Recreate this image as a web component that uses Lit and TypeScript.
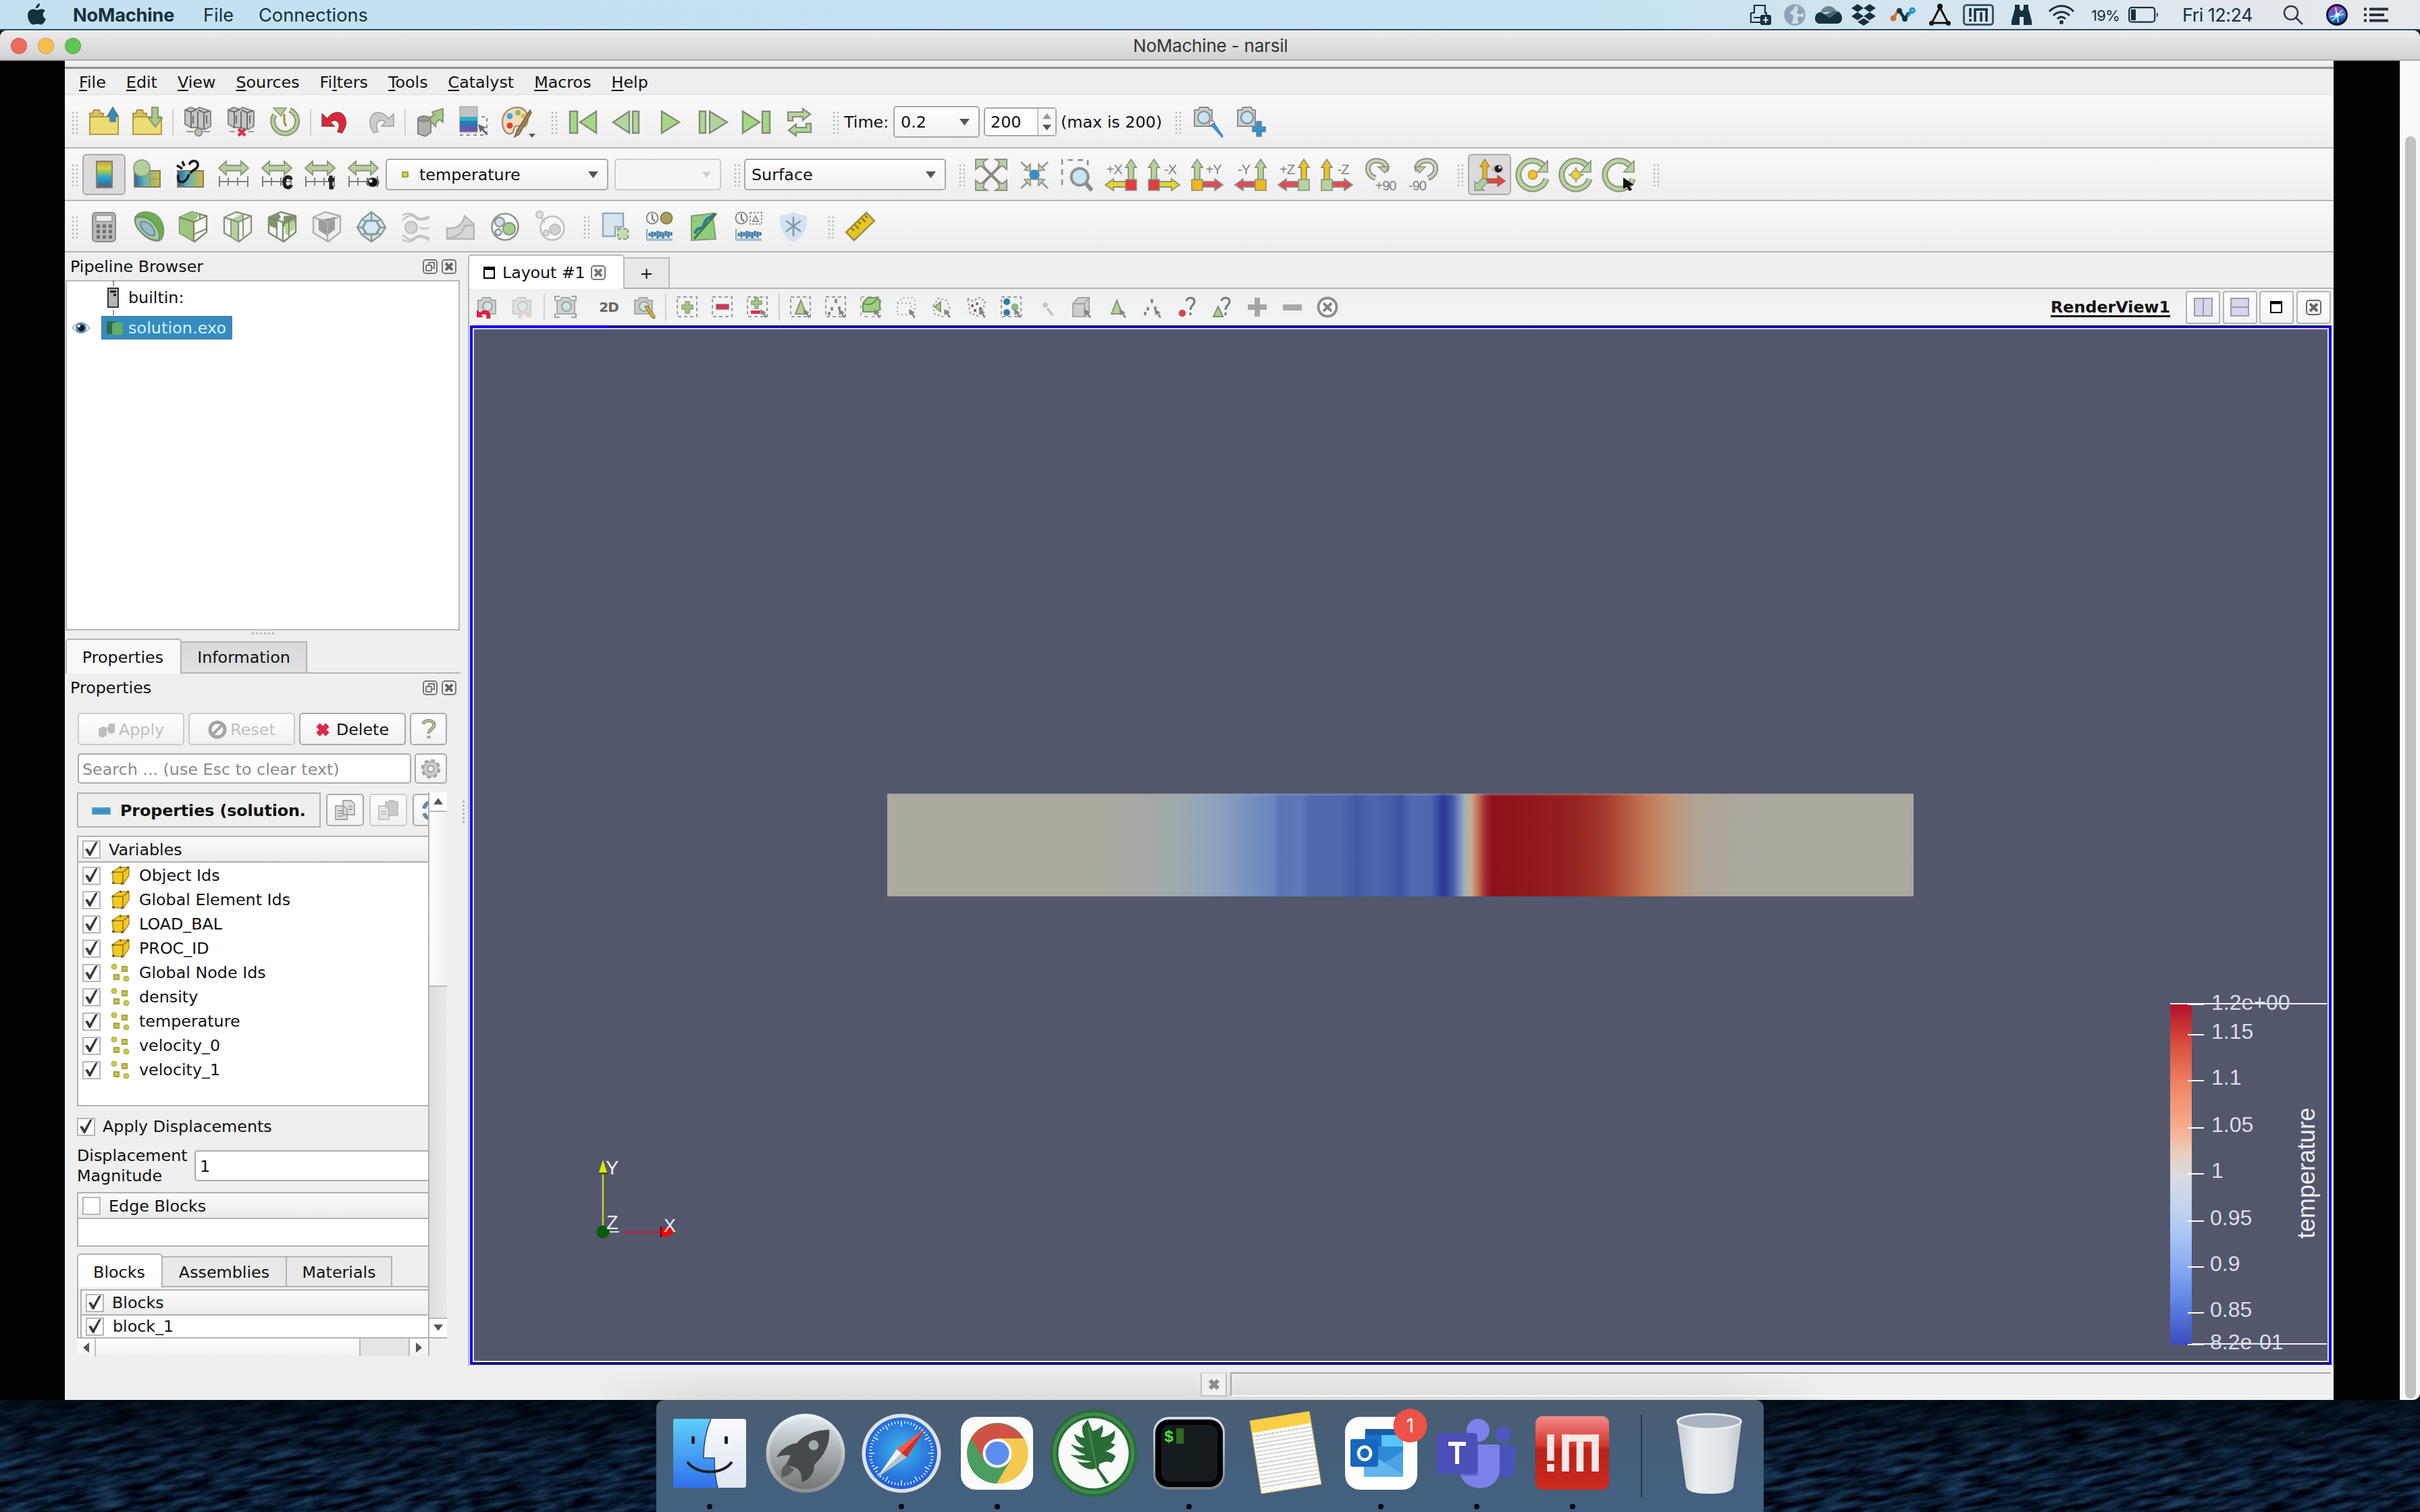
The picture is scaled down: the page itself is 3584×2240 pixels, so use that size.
import { LitElement, html, svg, css } from "lit";
import { customElement } from "lit/decorators.js";

const S = "#8b9080"; // icon outline
const icon = (body: unknown, size = 48) =>
  html`<svg class="ic" width=${size} height=${size} viewBox="0 0 ${size} ${size}" fill="none">${body}</svg>`;

/* ---------- main toolbar icons, 48px grid ---------- */
const folder = svg`<path d="M3 11h4l2-5h8l2 5h4v30H3z" fill="#dcc05c" stroke="#a8924a" stroke-width="2"/><path d="M9 16h36v26H3V20q0-4 6-4z" fill="#ecdc74" stroke="#b39a3e" stroke-width="2"/>`;
const server = svg`<path d="M5 6l8-4 9 3 4-3 9 3 8 3v22l-9 5-10-3-10 0-9-5z" fill="#c6c6c6" stroke="#858585" stroke-width="2"/><path d="M14 9v24M5 6l9 3 8-4M25 6l8 4 9-3M33 10v24M24 8v26M17 14v12M37 14v12" stroke="#6e6e6e" stroke-width="2"/>`;
const cube = (fill: string, st: string, inner: unknown) => svg`<path d="M4 10L22 2l22 6v24L26 46 4 33z" fill=${fill} stroke=${st} stroke-width="2.4"/>${inner}<path d="M4 10l21 7 19-9M25 17v28" stroke=${st} stroke-width="2.4"/>`;
const range = (extra: unknown) => svg`<path d="M2 14L13 4v6h22V4l11 10-11 10v-6H13v6z" fill="#b7cf9f" stroke="#8c9a7c" stroke-width="2"/><path d="M3 26v16M16 28v12M30 28v12M45 26v16M3 34h42" stroke="#808080" stroke-width="2"/>${extra}`;
const camera = svg`<path d="M4 6h6l2-4h12l2 4h4v24H4z" fill="#d0d0cc" stroke="#8c8c8c" stroke-width="2"/><circle cx="18" cy="17" r="9" fill="#c9e4ee" stroke="#7d98a4" stroke-width="2.5"/>`;
const clock = (x: number) => svg`<circle cx=${x} cy="11" r="8.5" stroke="#8a8a8a" stroke-width="2"/><path d="M${x} 5v7l4 4" stroke="#6a6a6a" stroke-width="2"/>`;
const plotBars = svg`<path d="M5 27v16h38" stroke="#8fa6b5" stroke-width="2"/><path d="M9 38v-5M13 40v-9M17 38v-6M21 41V30M25 39v-8M29 41v-9M33 38v-8M37 40v-9M41 37v-5" stroke="#3f7fac" stroke-width="3.4"/><path d="M5 43h38" stroke="#a9c2d0" stroke-width="4"/>`;

const axisIcon = (label: string, up: string, side: string, corner: string, right: boolean) => {
  const c = right ? 39 : 9;
  return svg`
  <path d="M${c - 4} 32V13h-4L${c} 1l8 12h-4v19z" fill=${up} stroke=${S} stroke-width="1.8"/>
  <path d=${right ? "M31 34H13v-4L1 39l12 8v-5h18z" : "M17 34h18v-4l12 9-12 8v-5H17z"} fill=${side} stroke=${S} stroke-width="1.8"/>
  <rect x=${right ? 31 : 1} y="31" width="16" height="16" fill=${corner} stroke=${S} stroke-width="1.6"/>
  <text x=${right ? 14 : 33} y="23" text-anchor="middle" class="axt">${label}</text>`;
};
const ring = (extra: unknown) => svg`<path d="M41 12A21 21 0 1 0 44 30" stroke=${S} stroke-width="9"/><path d="M41 12A21 21 0 1 0 44 30" stroke="#b5d49b" stroke-width="5"/><path d="M46 3v17H31z" fill="#b5d49b" stroke=${S} stroke-width="1.6"/>${extra}`;
const pointer = svg`<path d="M30 28v17l5-3 4 6 4-2-4-6 7-1z" fill="#111"/>`;

const I: Record<string, unknown> = {
  open: svg`${folder}<path d="M37 2l8 13h-4v8h-8v-8h-4z" fill="#2f8fc0" stroke="#53788a" stroke-width="1.5"/>`,
  save: svg`${folder}<path d="M31 2h9v16h6L36 31 26 18h5z" fill="#aac98c" stroke="#8b9a68" stroke-width="2"/>`,
  connect: svg`${server}<circle cx="25" cy="39" r="5.500" fill="#b7c7ae" stroke="#888" stroke-width="2"/><path d="M7 38h11M32 38h10" stroke="#999" stroke-width="2"/>`,
  disconnect: svg`${server}<path d="M20 34l10 10M30 34L20 44" stroke="#d8304a" stroke-width="4.500"/><path d="M7 38h8M35 38h8" stroke="#999" stroke-width="2"/>`,
  reload: svg`<path d="M10 13a18 18 0 1 0 22-7" stroke="#8b967b" stroke-width="8"/><path d="M10 13a18 18 0 1 0 22-7" stroke="#aed292" stroke-width="4"/><path d="M8 3h19l-8 12z" fill="#aed292" stroke="#8b967b" stroke-width="1.5"/><path d="M24 12v12l3 6" stroke="#a2913a" stroke-width="3"/>`,
  undo: svg`<path d="M3 12v18h18l-6-6c8-7 18 0 11 14l6 2c14-17 2-36-12-29-3 1-7 5-9 8z" fill="#e0243a" stroke="#8e3a3e" stroke-width="1.5"/>`,
  redo: svg`<path d="M45 12v18H27l6-6c-8-7-18 0-11 14l-6 2C2 23 14 4 28 11c3 1 7 5 9 8z" fill="#cdcdcd" stroke="#9f9f9f" stroke-width="1.5"/>`,
  extract: svg`<path d="M6 20l8-5 11 2v22l-8 6-11-4z" fill="#b0b0ac" stroke="#808080" stroke-width="2"/><ellipse cx="15" cy="19" rx="9" ry="4" fill="#9a9a96" stroke="#777" stroke-width="1.5"/><path d="M24 22c0-6 3-8 6-8l-3-5L43 4v20l-5-4c-4 2-6 5-6 10z" fill="#a7c78d" stroke="#84946f" stroke-width="2"/>`,
  cmapSel: svg`<rect x="4" y="1" width="26" height="38" fill="#c4c4c4" stroke="#999"/><rect x="4" y="16" width="26" height="9" fill="#2fb0bf"/><rect x="4" y="22" width="26" height="9" fill="#2778b8"/><rect x="4" y="30" width="26" height="8" fill="#6a55a8"/><path d="M4 43h40V16H32" stroke="#85859c" stroke-width="2" stroke-dasharray="5 5"/><path d="M31 27l12 5-4 2 6 7-2 2-6-7-3 3z" fill="#666"/>`,
  palette: svg`<path d="M24 2C10 3 3 13 3 24c0 12 7 19 13 17 6-2 2-9 7-11 6-2 11 4 15-1 5-8 4-27-14-27z" fill="#f0dcbc" stroke="#a09070" stroke-width="2.4"/><circle cx="26" cy="10" r="4" fill="#8fbd62"/><circle cx="14" cy="15" r="4.5" fill="#4ba5dc"/><circle cx="14" cy="29" r="4.5" fill="#e23b30"/><circle cx="34" cy="15" r="3.5" fill="#e0b43a"/><path d="M44 6L24 37l-3 9 7-4L46 10z" fill="#a08350" stroke="#6f6040" stroke-width="1.4"/><path d="M42 41h10l-5 6z" fill="#555"/>`,
  first: svg`<path d="M4 8h11v32H4zM43 8v32L19 24z" fill="#a6d884" stroke="#828c76" stroke-width="2.4"/>`,
  back: svg`<path d="M33 8h9v32h-9zM28 8v32L4 24z" fill="#b2d69a" stroke="#828c76" stroke-width="2.4"/>`,
  play: svg`<path d="M12 8v32l26-16z" fill="#a6d884" stroke="#828c76" stroke-width="2.4"/>`,
  fwd: svg`<path d="M4 8h9v32H4zM19 8v32l26-16z" fill="#b2d69a" stroke="#828c76" stroke-width="2.4"/>`,
  last: svg`<path d="M33 8h11v32H33zM4 8v32l25-16z" fill="#a6d884" stroke="#828c76" stroke-width="2.4"/>`,
  loop: svg`<path d="M7 22V9h22V4l11 8-11 9v-5H14v6zM41 26v13H19v5L8 36l11-9v5h15v-6z" fill="#b2d69a" stroke="#828c76" stroke-width="2.2"/>`,
  camPick: svg`${camera}<circle cx="30" cy="26" r="4" fill="#fff" stroke="#d66" stroke-width="1.5"/><path d="M28 28l5-3 13 19-1 3z" fill="#2e9bd8" stroke="#487c9c" stroke-width="1"/>`,
  camAdd: svg`${camera}<path d="M32 23h7v8h6v7h-6v7h-7v-7h-6v-7h6z" fill="#2f93cc" stroke="#5585a0" stroke-width="1.500"/>`,

  cbar: svg`<defs><linearGradient id="cb" x2="0" y2="1"><stop offset="0" stop-color="#b99a4e"/><stop offset=".25" stop-color="#ddd23c"/><stop offset=".45" stop-color="#7cc071"/><stop offset=".6" stop-color="#25a7d4"/><stop offset=".85" stop-color="#3d7a9c"/><stop offset="1" stop-color="#555a80"/></linearGradient></defs><rect x="13" y="4" width="23" height="39" fill="url(#cb)" stroke="#8a8070" stroke-width="2"/>`,
  edit: svg`<defs><linearGradient id="ce"><stop offset="0" stop-color="#2f5f93"/><stop offset=".4" stop-color="#5fb3c4"/><stop offset="1" stop-color="#d9ba36"/></linearGradient></defs><rect x="5" y="18" width="38" height="24" fill="url(#ce)" stroke="#857c58" stroke-width="2"/><path d="M28 19v22M28 30h15" stroke="#b59a3c" stroke-width="2"/><ellipse cx="16" cy="14" rx="12" ry="12" fill="#b4d19c" stroke="#94a283" stroke-width="2"/>`,
  linkc: svg`<rect x="5" y="18" width="38" height="24" fill="url(#ce)" stroke="#857c58" stroke-width="2"/><path d="M22 9c4-9 14-6 13 1-1 7-9 6-11 12M6 24c-2 10 3 12 8 10s7-8 8-11M12 4l3 7M4 10l8 5" stroke="#181818" stroke-width="3.6"/>`,
  range: range(""),
  rangeC: range(svg`<path d="M45 31c-1-5-10-6-10 4s9 9 10 4" stroke="#222" stroke-width="5.500"/>`),
  rangeT: range(svg`<path d="M40 25v18h4M36 31h9" stroke="#222" stroke-width="5"/>`),
  rangeV: range(svg`<ellipse cx="38" cy="35" rx="10" ry="7" fill="#666"/><circle cx="38" cy="35" r="6.500" fill="#111"/><circle cx="35" cy="33" r="2.500" fill="#eee"/>`),
  resetCam: svg`<path d="M8 8l32 32M40 8L8 40" stroke="#85897c" stroke-width="4"/><path d="M1 1h17l-6 4 2 7-7-1-6 5zM47 1v15l-6-5-7 1 2-7-6-4zM1 47V32l6 5 7-1-2 7 6 4zM47 47H30l6-4-2-7 7 1 6-5z" fill="#b9cfa8" stroke=${S} stroke-width="2"/>`,
  zoomData: svg`<path d="M4 5l16 15M44 5L28 20M4 44l16-15M44 44L28 29" stroke="#9aa090" stroke-width="3"/><path d="M18 18V8L9 17zM30 18V8l9 9zM18 30v10L9 31zM30 30v10l9-9z" fill="#c0d2b0" stroke=${S} stroke-width="1.600"/><circle cx="24" cy="24" r="7" fill="#2d92ca" stroke="#62879a" stroke-width="1.500"/>`,
  zoomBox: svg`<path d="M1 39V2h38v10" stroke="#8f8f8f" stroke-width="2.600" stroke-dasharray="8 7"/><path d="M34 34l11 13" stroke="#8b8b84" stroke-width="6"/><circle cx="27" cy="27" r="12.500" fill="#c8e6f0" stroke="#8a9296" stroke-width="4"/>`,
  pX: axisIcon("+X", "#b5d49b", "#e6d52c", "#e23c3c", true),
  mX: axisIcon("-X", "#b5d49b", "#e6d52c", "#e23c3c", false),
  pY: axisIcon("+Y", "#b5d49b", "#e4485a", "#f0b81c", false),
  mY: axisIcon("-Y", "#b5d49b", "#e4485a", "#f0b81c", true),
  pZ: axisIcon("+Z", "#f0c31c", "#e4485a", "#b5d49b", true),
  mZ: axisIcon("-Z", "#f0c31c", "#e4485a", "#b5d49b", false),
  rotP: svg`<path d="M17 29C0 22 4 3 18 3s18 10 14 15" stroke=${S} stroke-width="8"/><path d="M17 29C0 22 4 3 18 3s18 10 14 15" stroke="#c6d6b8" stroke-width="4"/><path d="M21 12h16l-6 9z" fill="#b5d49b" stroke=${S} stroke-width="1.500"/><text x="32" y="47" text-anchor="middle" class="axt">+90</text>`,
  rotM: svg`<path d="M31 29C48 22 44 3 30 3s-18 10-14 15" stroke=${S} stroke-width="8"/><path d="M31 29C48 22 44 3 30 3s-18 10-14 15" stroke="#c6d6b8" stroke-width="4"/><path d="M11 12h16l-9 9z" fill="#b5d49b" stroke=${S} stroke-width="1.500"/><text x="15" y="47" text-anchor="middle" class="axt">-90</text>`,
  axesVis: svg`<path d="M14 30V12h-4l7-11 7 11h-4v18z" fill="#f0b51c" stroke="#9a8a50" stroke-width="1.500"/><path d="M20 30h16v-5l11 8-11 8v-5H20z" fill="#df4a3c" stroke="#a05a50" stroke-width="1.500"/><path d="M18 30l3 5-9 9 4 3H2V34l4 3 7-8z" fill="#a6d29a" stroke=${S} stroke-width="1.500"/><ellipse cx="36" cy="15" rx="9" ry="6" fill="#bbb"/><circle cx="37" cy="15" r="5.500" fill="#1c1c1c"/><circle cx="39" cy="13" r="2" fill="#fff"/>`,
  cen1: ring(svg`<circle cx="24" cy="24" r="6.500" fill="#f2c51c" stroke="#c9984c" stroke-width="2"/>`),
  cen2: ring(svg`<path d="M24 13v22M13 24h22" stroke="#999" stroke-width="3"/><circle cx="24" cy="24" r="6.500" fill="#e6d43c" stroke="#b8a85c" stroke-width="2"/>`),
  cen3: ring(pointer),

  calc: svg`<rect x="7" y="3" width="34" height="43" rx="5" fill="#b9b9b9" stroke="#8b8b8b" stroke-width="2"/><rect x="12" y="7" width="24" height="9" fill="#ededed" stroke="#8f8f8f" stroke-width="1.500"/><path d="M13 23h23M13 31h23M13 39h23" stroke="#6f6f6f" stroke-width="5" stroke-dasharray="5 4"/>`,
  contour: svg`<path d="M4 10C12-2 34 0 42 14s4 30-4 31C24 46 2 28 4 10z" fill="#69b043" stroke="#84947a" stroke-width="2"/><path d="M4 12c6-6 22-2 30 10s8 22 2 22C22 44 2 26 4 12z" fill="#a3c8a0" stroke="#748a74" stroke-width="2"/><path d="M12 18c4-4 14 0 18 7s4 12 0 12c-8 0-20-12-18-19z" fill="#93bccb" stroke="#6d8794" stroke-width="2"/>`,
  clip: cube("#fafaf8", "#7d8a68", svg`<path d="M4 10L22 2l12 3-9 12v28L4 33z" fill="#9dc47d"/><path d="M25 35l19-8M34 5v8" stroke="#7d8a68" stroke-width="2"/>`),
  slice: cube("#f6f6f4", "#8a9280", svg`<path d="M14 13l18-9v9l-7 4v28l-11-7z" fill="#b4d39b"/><path d="M14 13v26M32 5v34" stroke="#8a9280" stroke-width="2"/>`),
  threshold: cube("#f6f6f4", "#7f8a70", svg`<path d="M4 10L18 4l4 5-6 8v10L4 22zM26 8l14-1 4 1v10l-18 6z" fill="#7f966a"/><path d="M28 20l14-6v14l-8 4v6l-6-4z" fill="#b4d890"/><path d="M16 17v22M34 12v26" stroke="#7f8a70" stroke-width="2"/>`),
  subset: cube("#ededed", "#b0b0b0", svg`<path d="M12 14l24-4v18l-12 9-12-8z" fill="#9c9c9c"/><path d="M12 14l12 3 12-7" stroke="#808080" stroke-width="2"/>`),
  glyph: svg`<path d="M24 2l14 11 7 12-7 11-14 10-14-10L3 25l7-12z" fill="#d5e8ed" stroke="#849a98" stroke-width="2.400"/><path d="M24 2v12M10 13l7 4M38 13l-7 4M2 25h10M46 25H36M10 36l7-4M38 36l-7-4M24 46V35" stroke="#849a98" stroke-width="2.400"/><path d="M17 15h14l6 10-6 10H17l-6-10z" stroke="#849a98" stroke-width="3"/>`,
  stream: svg`<path d="M4 7c8-5 14-3 20 2s14 2 20-1M4 14c10-9 14-8 20-3s14 2 20 0M4 36c10 9 14 8 20 3s14 0 20 2M4 43c8 5 14 3 20-2s14 0 20 3M30 25c5 3 9 2 14 0" stroke="#c2c2c2" stroke-width="2.400"/><circle cx="17" cy="25" r="9" fill="#d4d4d4" stroke="#b9b9b9" stroke-width="2"/>`,
  warp: svg`<path d="M4 26c14 2 24-6 26-18l14 12v22H4z" fill="#d6d6d6" stroke="#b5b5b5" stroke-width="2.400"/><path d="M4 41c16-2 24-8 26-19h14" stroke="#b5b5b5" stroke-width="2.400"/>`,
  group: svg`<circle cx="24" cy="24" r="19.500" fill="#fcfcfc" stroke="#8b978b" stroke-width="2.600"/><circle cx="16" cy="17" r="7" fill="#cfe0ea" stroke="#8b9aa0" stroke-width="2.400"/><circle cx="30" cy="27" r="9" fill="#a4cf8b" stroke="#8b9880" stroke-width="2.400"/><circle cx="14" cy="32" r="4.500" fill="#dfe8ef" stroke="#879098" stroke-width="2.400"/>`,
  extractG: svg`<circle cx="28" cy="26" r="17.500" fill="#f8f8f8" stroke="#c0c0c0" stroke-width="2.600"/><circle cx="9" cy="6" r="5" fill="#e2e2e2" stroke="#bcbcbc" stroke-width="2"/><circle cx="32" cy="28" r="8" fill="#d0d0d0" stroke="#bdbdbd" stroke-width="2"/><circle cx="19" cy="33" r="4" fill="#ddd" stroke="#bcbcbc" stroke-width="2"/><path d="M11 10l6 8" stroke="#bbb" stroke-width="2"/>`,
  selShape: svg`<path d="M6 4h30v20H24v14H6z" fill="#d7e5f0" stroke="#93a9bd" stroke-width="2.400"/><path d="M28 27h15v15H28z" fill="#c5dbb0" stroke="#8da273" stroke-width="2.400" stroke-dasharray="5 3"/>`,
  plotTime: svg`${clock(13)}<circle cx="34" cy="11" r="8.500" fill="#a89f5f" stroke="#8a8150" stroke-width="2"/>${plotBars}`,
  plotLine: svg`<path d="M5 8l31-4 5 38-36 2z" fill="#8fce7c" stroke="#7fa06c" stroke-width="2"/><path d="M10 34c6-14 10-2 14-14s8-6 16-16" stroke="#2f74a8" stroke-width="4.500"/><path d="M9 42L42 4" stroke="#457a38" stroke-width="3"/>`,
  plotSel: svg`${clock(13)}<path d="M26 3h17v17H26z" stroke="#999" stroke-width="2" stroke-dasharray="3 2"/><path d="M30 16l4-8 4 8z" stroke="#999" stroke-width="2"/>${plotBars}`,
  probe: svg`<path d="M24 2c6 4 12 5 20 5 1 20-5 32-20 40C9 39 3 27 4 7c8 0 14-1 20-5z" fill="#d5e2ef"/><path d="M24 9v29M13 15l22 16M35 15L13 31" stroke="#7c9ab3" stroke-width="2.600"/>`,
  ruler: svg`<path d="M3 32L33 3l12 12-30 29z" fill="#e4c720" stroke="#9a8648" stroke-width="2.400"/><path d="M11 26l4 4M16 21l6 6M21 16l4 4M26 11l6 6M31 7l4 4" stroke="#85702c" stroke-width="2.200"/>`,
};

/* ---------- render-view toolbar icons, 36px grid ---------- */
const dashBox = svg`<rect x="3" y="3" width="29" height="29" stroke="#9a9a9a" stroke-width="2" stroke-dasharray="5 4"/>`;
const cur = svg`<path d="M22 21l9 5-3 1 4 6-3 1-3-6-3 2z" fill="#808080"/>`;
const cam = (f: string) => svg`<path d="M5 8h5l2-4h11l2 4h6v20H5z" fill=${f} stroke="#a9a9a6" stroke-width="2"/><circle cx="19" cy="17" r="7" fill="#cfe3e4" stroke="#96a5a1" stroke-width="2"/>`;
const tri = svg`<path d="M18 8l8 20H10z" fill="#b2d28f" stroke="#879472" stroke-width="2"/>`;
const pts = svg`<path d="M18 6v6M12 18v5M23 17v5M8 25v5" stroke="#808080" stroke-width="3.500"/>`;
const V: Record<string, unknown> = {
  undo: svg`${cam("#d3d3d1")}<path d="M3 22v11h10l-3-3c5-4 9 0 7 5h6c3-12-8-16-15-9z" fill="#e11f3b"/>`,
  redo: svg`<g opacity=".55">${cam("#d3d3d1")}<path d="M32 22v11H22l3-3c-5-4-9 0-7 5h-5c-3-12 8-16 15-9z" fill="#dcb6b6"/></g>`,
  snap: svg`${cam("#d3d3d1")}<path d="M2 9V2h7M26 2h7v7M2 27v6h7M26 33h7v-6" stroke="#a0a0a0" stroke-width="2"/>`,
  zoom: svg`${cam("#c9c9c6")}<path d="M20 17l4-1 11 16-1 3-4-2z" fill="#d6bf2e" stroke="#8c7c34" stroke-width="1.500"/>`,
  selAdd: svg`${dashBox}<path d="M15 10h6v5h5v6h-5v6h-6v-6h-5v-6h5z" fill="#a2c97c" stroke="#8b9a70" stroke-width="1.500"/>`,
  selSub: svg`${dashBox}<rect x="9" y="14" width="18" height="7" fill="#dc3050" stroke="#96606a" stroke-width="1.500"/>`,
  selTog: svg`${dashBox}<path d="M14 4h5v5h5v5h-5v6h-5v-6H9V9h5z" fill="#a2c97c" stroke="#8b9a70" stroke-width="1.500"/><rect x="8" y="23" width="14" height="5" fill="#dc3050"/>${cur}`,
  cells: svg`${dashBox}${tri}${cur}`,
  points: svg`${dashBox}${pts}${cur}`,
  frus: svg`<rect x="3" y="3" width="29" height="29" stroke="#b0b0b0" stroke-width="2" stroke-dasharray="5 6"/><path d="M6 12l7-8h14l4 4v14l-6 3H6z" fill="#9ecf7e" stroke="#6f9160" stroke-width="2"/><path d="M7 13c10 3 14 0 20-7" stroke="#6f9160" stroke-width="2"/>${cur}`,
  frusP: svg`<path d="M5 12l8-8h14l4 5v14l-6 6H5zM5 12h20v18" stroke="#a5a5a5" stroke-width="2" stroke-dasharray="2 4"/>${cur}`,
  poly: svg`<path d="M6 16l8-11 12 3 5 12-11 12-12-4z" stroke="#a3a3a3" stroke-width="2" stroke-dasharray="3 3"/><path d="M17 10v15l-9-7.500z" fill="#9fc77d" stroke="#778a62" stroke-width="1.500"/>${cur}`,
  polyP: svg`<path d="M5 5l8 4 9-5 9 5-3 12-8 10-11-4z" stroke="#a89d9e" stroke-width="2.500" stroke-dasharray="3 3"/><path d="M12 14v4M19 11v4M16 21v4M24 18v4" stroke="#7a5c60" stroke-width="3.500"/>${cur}`,
  block: svg`${dashBox}<circle cx="11" cy="10" r="5" fill="#2e7da5"/><circle cx="11" cy="26" r="5" fill="#2e7da5"/><circle cx="23" cy="18" r="5.500" fill="#8fb587"/>${cur}`,
  hovP: svg`<circle cx="16" cy="15" r="4" fill="#c8c8c8"/><path d="M19 20l8 10" stroke="#bdbdbd" stroke-width="3.500"/>`,
  hovC: svg`<path d="M5 13l8-9h16v22l-5 6H5zM5 13h17v18M22 13l7-9" fill="#cecece" stroke="#a5a5a5" stroke-width="2"/>${cur}`,
  cellI: svg`${tri}${cur}`,
  pntI: svg`${pts}${cur}`,
  qP: svg`<path d="M17 9c1-7 13-6 12 1 0 5-6 5-6 12M23 26v4" stroke="#777" stroke-width="3"/><circle cx="11" cy="27" r="5" fill="#e1404a" stroke="#a07070"/>`,
  qC: svg`<path d="M17 9c1-7 13-6 12 1 0 5-6 5-6 12M23 26v4" stroke="#777" stroke-width="3"/><path d="M12 17l7 15H5z" fill="#abcf88" stroke="#7f8f6a" stroke-width="2"/>`,
  plus: svg`<path d="M14 4h8v10h10v8H22v10h-8V22H4v-8h10z" fill="#a5a5a5"/>`,
  minus: svg`<rect x="4" y="14" width="28" height="9" fill="#a8a8a8"/>`,
  clear: svg`<circle cx="18" cy="18" r="13.500" fill="#fff" stroke="#8d8d8d" stroke-width="4"/><path d="M12 12l12 12M24 12L12 24" stroke="#838383" stroke-width="4"/>`,
};

const ocean = html`<div class="ocean"><svg width="3900" height="1200" viewBox="0 0 3900 1200">
  <defs><filter id="wv" x="0" y="0" width="100%" height="100%" color-interpolation-filters="sRGB">
    <feTurbulence type="fractalNoise" baseFrequency=".022 .11" numOctaves="5" seed="11"/>
    <feColorMatrix values=".26 .04 0 0 -.115  .42 .08 0 0 -.145  .54 .12 0 0 -.145  0 0 0 0 1"/>
  </filter></defs><rect width="3900" height="1200" filter="url(#wv)"/></svg></div>`;

/* ---------- dock icons, one 142x166 slot each ---------- */
const ticks = Array.from({ length: 60 }, (_, i) => svg`<path d="M71 31v${i % 5 ? 4 : 8}" transform="rotate(${i * 6} 71 79)" stroke="#e6f0ff" stroke-width="1.500"/>`);
const D: Record<string, unknown> = {
  finder: svg`<defs><linearGradient id="fa" x2="0" y2="1"><stop stop-color="#5fd0fa"/><stop offset="1" stop-color="#2f6feb"/></linearGradient><linearGradient id="fb" x2="0" y2="1"><stop stop-color="#f7f8fb"/><stop offset="1" stop-color="#dfe7f0"/></linearGradient></defs>
    <rect x="17" y="28" width="108" height="102" rx="4" fill="url(#fb)"/><path d="M21 28h52c-8 18-11 38-11 58h16c0 15 1 30 5 44H21q-4 0-4-4V32q0-4 4-4z" fill="url(#fa)"/><path d="M73 28c-8 18-11 38-11 58h16c0 15 1 30 5 44" fill="none" stroke="#24456b" stroke-width="1.500"/>
    <path d="M46.500 56v7M95.500 56v7" stroke="#1b2129" stroke-width="5" stroke-linecap="round"/><path d="M39 93c14 18 50 18 64 0" fill="none" stroke="#1b2129" stroke-width="4" stroke-linecap="round"/>`,
  rocket: svg`<defs><linearGradient id="ro" x2="0" y2="1"><stop stop-color="#dfe9ee"/><stop offset=".5" stop-color="#a5adb0"/><stop offset="1" stop-color="#747575"/></linearGradient><linearGradient id="rp" x2="0" y2="1"><stop stop-color="#eef6fa"/><stop offset="1" stop-color="#8f8f8f"/></linearGradient></defs><circle cx="71" cy="79" r="58.500" fill="url(#rp)"/><circle cx="71" cy="79" r="53" fill="url(#ro)"/>
    <path d="M106 44c-22 1-38 8-48 20-14 2-24 10-30 21 8-3 15-4 21-3l-7 14c10 4 18 3 22 13l2 13c12-5 18-13 18-26 14-13 24-30 22-52z" fill="#474a4d"/><circle cx="83" cy="67" r="7.500" fill="#a3aaad"/><path d="M42 95c-6 5-8 12-6 20 8-2 14-6 18-12z" fill="#5a5d60"/>`,
  safari: svg`<defs><radialGradient id="sa" cy=".45"><stop stop-color="#3fb9ea"/><stop offset="1" stop-color="#2263d8"/></radialGradient></defs><circle cx="71" cy="79" r="58.500" fill="#dfe2e4"/><circle cx="71" cy="79" r="53" fill="url(#sa)"/>${ticks}
    <path d="M107 42L64 73l7 6z" fill="#ff5a4c"/><path d="M107 42L71 79l8 6z" fill="#c93028"/><path d="M35 115l29-42 7 6z" fill="#f5f5f5"/><path d="M35 115l36-36 8 6z" fill="#b9c2c6"/>`,
  chrome: svg`<rect x="17" y="25" width="107" height="108" rx="22" fill="#fbfbfb"/><circle cx="71" cy="79" r="45" fill="#4a9d60"/><path d="M32 57a45 45 0 0 1 78 1H71L52 90z" fill="#cf5344"/><path d="M71 57h40a45 45 0 0 1-41 67l20-34z" fill="#f5c852"/><circle cx="71" cy="79" r="21.500" fill="#fff"/><circle cx="71" cy="79" r="17.500" fill="#5b8def"/>`,
  leaf: svg`<circle cx="71.500" cy="79" r="64.500" fill="#2a6c38"/><circle cx="71.500" cy="79" r="58" fill="none" stroke="#3f8c4d" stroke-width="5"/><circle cx="71.500" cy="79" r="52" fill="#f8fbf8"/><path d="M63 29c3 8 5 12 7 17 5-1 11-4 15-9 1 7 0 12-3 18 7 0 14-3 21-10 1 9-1 14-6 18 3 2 5 2 7 3-4 5-9 8-15 10 5 1 10 3 15 7-1 4-3 7-6 10-7-3-12-1-18 2l-1 6 16 22-6 1-14-23c-9 5-19-1-28-10 8 2 15 2 22 0-13-1-24-4-32-10 8 1 16 2 23 0-10-3-18-9-22-16 7 4 13 6 20 5-9-5-14-12-15-20 5 4 10 6 15 6-3-6-4-12-3-17z" fill="#296c35"/><path d="M64 40l12 62" stroke="#4d8c57" stroke-width="2"/>`,
  term: svg`<defs><linearGradient id="te" x2="0" y2="1"><stop stop-color="#cfe0ea"/><stop offset="1" stop-color="#7b7f82"/></linearGradient></defs><rect x="18" y="25" width="106" height="108" rx="23" fill="url(#te)"/><rect x="21" y="29" width="100" height="100" rx="20" fill="#000"/><rect x="30" y="37" width="83" height="84" rx="12" fill="#151c1f"/><text x="34" y="62" class="dollar">$</text><rect x="52" y="42" width="11" height="23" fill="#2c6a1e"/>`,
  notes: svg`<path d="M19 31l88-14 18 108-89 14z" fill="#fafaf8" stroke="#c9a23a" stroke-width="1"/><path d="M19 31l88-14 3 17-87.500 15z" fill="#f8cf45"/>${Array.from({ length: 14 }, (_, i) => svg`<path d="M${24.5 + i * 0.9} ${54 + i * 5.8}l87-14.500" stroke=${i ? "#cfd0d2" : "#a8a27c"} stroke-width="1.600" stroke-dasharray=${i ? "none" : "2 2"}/>`)}`,
  outlook: svg`<rect x="18" y="25" width="107" height="108" rx="22" fill="#fff"/><path d="M48 43h56v68q0 3-3 3H46V80z" fill="#2f8ad8"/><path d="M48 43h56v9H48z" fill="#1c5ba4"/><path d="M72 52h32v17H72z" fill="#57c5f7"/><path d="M48 52h24v17H48z" fill="#1a70c8"/><path d="M46 76l29 18 29-18v35q0 3-3 3H46z" fill="#4ba3e6"/><path d="M69 88l35 23-3 3H46V98z" fill="#63b5ee"/><rect x="26" y="58" width="41" height="41" rx="3" fill="#1668bd"/><ellipse cx="47" cy="79" rx="9" ry="9.500" fill="none" stroke="#fff" stroke-width="4.500"/><circle cx="114.500" cy="38" r="25" fill="#ec5245"/><text x="114.500" y="48" text-anchor="middle" class="badge">1</text>`,
  teams: svg`<circle cx="73" cy="45" r="17" fill="#7b83eb"/><circle cx="110" cy="50.500" r="11.500" fill="#5058c0"/><path d="M100 67h25q3 0 3 3v24c0 26-24 26-28 12z" fill="#4a52bb"/><path d="M45 66h56q4 0 4 4v32c0 38-58 38-60 0z" fill="#7b83eb"/><path d="M45 66h28v46H47z" fill="#5a62cf"/><rect x="12" y="49" width="60" height="60" rx="5" fill="#4a50b8"/><path d="M29 65h26M42 65v30" stroke="#fff" stroke-width="6"/>`,
  nx: svg`<defs><linearGradient id="nx" x2="0" y2="1"><stop stop-color="#ef8d88"/><stop offset=".4" stop-color="#d9322b"/><stop offset=".45" stop-color="#b82219"/><stop offset="1" stop-color="#cc2a1f"/></linearGradient></defs><rect x="16" y="24" width="109" height="109" rx="10" fill="url(#nx)"/><path d="M38.500 51v39M38.500 95v11M60.500 106V51M55 56.500h55M82 62v44M104.500 51v55" stroke="#f3e9e8" stroke-width="10.500"/>`,
  trash: svg`<defs><linearGradient id="tr"><stop stop-color="#c6cbd1"/><stop offset=".3" stop-color="#eceff1"/><stop offset=".75" stop-color="#dfe2e5"/><stop offset="1" stop-color="#c0c6cc"/></linearGradient></defs><path d="M23 33l13 96q3 10 35 10t35-10l12-96z" fill="url(#tr)"/><ellipse cx="70.500" cy="32" rx="47" ry="11" fill="#aab3bf" stroke="#e8ecef" stroke-width="3"/>`,
};

const check = (on = true) => html`<span class="chk">${on ? html`<svg width="27" height="27" viewBox="0 0 27 27"><path d="M4 13l4-1 3 5 8-14 4-1-11 21h-2z" fill="#3a3a3a"/></svg>` : ""}</span>`;
const cellIc = html`<svg class="vi" width="28" height="28" viewBox="0 0 28 28"><path d="M2 9l10-7h15v12l-8 12H4z" fill="#efcb1c" stroke="#b18a38" stroke-width="1.500"/><path d="M2 9h16l9-7M18 9v17" fill="none" stroke="#a5812c" stroke-width="2"/><path d="M2 25h4M15 26h4M2 9h3M13 2h3M24 2h3" stroke="#6d5a34" stroke-width="3"/></svg>`;
const nodeIc = html`<svg class="vi" width="28" height="28" viewBox="0 0 28 28"><circle cx="5" cy="5" r="4" fill="#cfca32" stroke="#a7a272"/><rect x="17" y="5" width="7" height="7" fill="#c9c655" stroke="#a7a23c" stroke-width="2"/><rect x="5" y="17" width="7" height="7" fill="#c9c655" stroke="#a7a23c" stroke-width="2"/><circle cx="23" cy="23" r="4" fill="#cfca32" stroke="#a7a272"/></svg>`;
const dockBtns = html`<svg width="50" height="22" viewBox="0 0 50 22" fill="none" stroke="#777" stroke-width="2"><rect x="1" y="1" width="20" height="20" rx="4"/><rect x="5" y="9" width="8" height="8" rx="1"/><path d="M9 8V5h8v8h-3"/><rect x="29" y="1" width="20" height="20" rx="4"/><path d="M34 6l10 10M44 6L34 16" stroke-width="4" stroke="#666"/></svg>`;
const arrowD = (w = 15, c = "#555") => html`<svg width=${w} height="10" viewBox="0 0 15 10"><path d="M0 0h15L7.500 10z" fill=${c}/></svg>`;

const gap = (w: number) => html`<i style="width:${w}px"></i>`;
const handle = html`<b class="handle"></b>`;
const sep = (w: number) => html`<b class="sep" style="width:${w}px"></b>`;
const bt = (n: string, cls = "") => html`<span class="slot ${cls}">${icon(I[n])}</span>`;
const vb = (n: string) => html`<span class="vslot">${icon(V[n], 36)}</span>`;

@customElement("app-root")
export class AppRoot extends LitElement {
  static styles = css`
    :host { display: block; width: 3584px; height: 2240px; overflow: hidden; font: 23.8px/28px "DejaVu Sans", sans-serif; color: #111; }
    * { box-sizing: border-box; }
    i, b, span { flex: none; }
    svg { display: block; flex: none; overflow: visible; }
    .screen { width: 3584px; height: 2240px; display: flex; flex-direction: column; background: #0a1a2b; }
    .mac { height: 45px; flex: none; display: flex; align-items: center; background: linear-gradient(90deg, #c4e1f2 0%, #c5e2f2 66%, #e5e8ed 96%); border-bottom: 2px solid #2b4669; font-family: Inter, "Liberation Sans", sans-serif; color: #15303f; font-size: 27.2px; padding: 2px 0 0 41px; }
    .mac .apple { width: 67px; margin-top: -4px; }
    .mac span { white-space: nowrap; }
    .mac .app { font-weight: 700; width: 193px; letter-spacing: -0.2px; }
    .mac .m1 { width: 82px; }
    .mac .fill { flex: 1; }
    .mac .tray { display: flex; align-items: center; width: 1003px; }
    .mac .tray > i { display: flex; justify-content: center; margin-top: -2px; }
    .pct { width: 55px; font-size: 22px; letter-spacing: -0.7px; }
    .clock { width: 133px; letter-spacing: -0.6px; }
    .title { height: 45px; flex: none; display: flex; align-items: center; background: linear-gradient(#ececec, #d2d2d2); border-bottom: 2px solid #acacac; border-radius: 10px 10px 0 0; box-shadow: inset 0 2px 0 #f6f6f6; font: 26px/30px Inter, "Liberation Sans", sans-serif; color: #333; padding: 2px 0 0 16px; }
    .title .dot { width: 24px; height: 24px; border-radius: 50%; margin-right: 16px; border: 1px solid rgba(0,0,0,.15); }
    .title .name { margin-left: 1542px; letter-spacing: -0.2px; padding-top: 1px; }
    .win { height: 1984px; flex: none; display: flex; background: #000; }
    .remote { margin-left: 96px; width: 3360px; height: 1984px; background: #efefef; display: flex; flex-direction: column; }
    .mscroll { margin-left: 98px; width: 30px; background: #fafafa; border-left: 1px solid #e2e2e2; padding: 112px 0 2px 7px; display: flex; border-bottom-right-radius: 10px; }
    .mscroll i { width: 16px; border-radius: 8px; background: #c1c1c1; }
    .strip { height: 12px; flex: none; background: linear-gradient(#fafafa, #e6e6e6); border-bottom: 3px solid #8f8f8f; }
    .menu { height: 39px; flex: none; display: flex; gap: 30px; padding: 6px 0 0 21px; border-bottom: 2px solid #e6e6e6; }
    u { text-decoration-thickness: 2px; text-underline-offset: 3px; }
    .tb { flex: none; display: flex; align-items: center; background: linear-gradient(#f9f9f9, #eee); border-bottom: 2px solid #b4b4b4; white-space: nowrap; padding-top: 2px; }
    .t1 { height: 79px; } .t2 { height: 78px; padding-top: 1px; } .t3 { height: 76px; }
    .handle { width: 10px; height: 34px; background: radial-gradient(circle, #b5b5b5 1.3px, transparent 1.7px) 0 0 / 6px 6px; }
    .sep { height: 40px; background: linear-gradient(90deg, transparent 45%, #d2d2d2 45%, #d2d2d2 60%, transparent 60%); }
    .slot { width: 64px; height: 61px; display: flex; align-items: center; justify-content: center; }
    .t3 .slot { width: 66px; }
    .slot.on { background: #dcdadc; border: 2px solid #aaa; border-radius: 6px; }
    .axt { font: 20px "Liberation Sans", sans-serif; fill: #808080; letter-spacing: -1px; }
    .combo { height: 47px; border: 2px solid #a8a8a8; border-radius: 5px; background: linear-gradient(#fff, #f1f1f1); display: flex; align-items: center; justify-content: space-between; padding: 0 13px 0 9px; }
    .combo.off { border-color: #ccc; background: #f5f5f5; }
    .combo .lead { display: flex; align-items: center; }
    .sq { width: 10px; height: 9px; background: #d4cc4c; border: 2px solid #aaa438; margin: 0 16px 0 13px; }
    .spin { width: 108px; height: 43px; background: #fff; border: 2px solid #a8a8a8; border-radius: 5px; display: flex; align-items: center; padding-left: 8px; justify-content: space-between; }
    .spin .ar { width: 27px; height: 39px; border-left: 2px solid #c4c4c4; display: flex; flex-direction: column; align-items: center; justify-content: center; gap: 7px; background: #f7f7f7; }
    .flip { transform: rotate(180deg); }
    .body { display: flex; height: 1650px; flex: none; }
    .left { width: 586px; padding-left: 1px; display: flex; flex-direction: column; }
    .gutter { width: 11px; display: flex; align-items: center; justify-content: center; }
    .gutter i { width: 3px; height: 34px; margin: 8px 0 0 -3px; background: repeating-linear-gradient(#b8b8b8 0 3px, transparent 3px 6px); }
    .dtitle { height: 41px; width: 579px; display: flex; align-items: center; justify-content: space-between; padding-left: 7px; flex: none; }
    .tree { width: 584px; height: 519px; flex: none; background: #fff; border: 2px solid #b8b8b8; padding-top: 6px; }
    .trow { display: flex; align-items: center; height: 35px; }
    .r1 { padding-left: 60px; margin-bottom: 10px; }
    .trow svg.tic { margin-right: 14px; }
    .sel { display: flex; align-items: center; height: 35px; width: 194px; background: #358bc0; border: 1px solid #4d7795; color: #d5f4ff; padding-left: 6px; letter-spacing: .1px; }
    .sel svg { margin-right: 8px; }
    .dots { height: 12px; flex: none; display: flex; justify-content: center; padding-top: 3px; }
    .dots i { width: 34px; height: 3px; margin-right: -1px; background: repeating-linear-gradient(90deg, #b8b8b8 0 3px, transparent 3px 6px); }
    .tabs { display: flex; height: 52px; flex: none; align-items: flex-end; }
    .tab { display: flex; align-items: center; justify-content: center; border: 2px solid #b4b4b4; }
    .tab.a { height: 52px; background: #f9f9f9; border-bottom: 0; border-radius: 5px 5px 0 0; padding: 2px 2px 0 0; }
    .tab.b { height: 48px; background: linear-gradient(#dadada, #e0e0e0); border-left: 0; }
    .tail { flex: 1; border-bottom: 2px solid #b4b4b4; }
    .btns { display: flex; gap: 6px; margin: 17px 0 12px 18px; height: 48px; flex: none; }
    .btn { border: 2px solid #aaa; border-radius: 5px; background: linear-gradient(#fff, #f1f1f1); display: flex; align-items: center; justify-content: center; }
    .btn.off { border-color: #ccc; color: #c0c0c0; }
    .w158 { width: 158px; padding-top: 2px; } .w55 { width: 55px; }
    .search { display: flex; gap: 5px; margin: 0 0 13px 18px; height: 45px; flex: none; }
    .field { width: 494px; background: #fff; border: 2px solid #aaa; border-radius: 5px; color: #8a8a8a; padding: 8px 0 0 5px; white-space: nowrap; }
    .area { margin-left: 17px; width: 548px; height: 835px; display: grid; grid-template: 807px 28px / 520px 28px; flex: none; }
    .clip { overflow: hidden; display: flex; flex-direction: column; }
    .head { display: flex; height: 52px; margin-bottom: 12px; align-items: center; flex: none; }
    .hbox { width: 361px; height: 52px; border: 2px solid #b2b2b2; font-weight: 700; display: flex; align-items: center; padding: 2px 0 0 20px; white-space: nowrap; overflow: hidden; flex: none; letter-spacing: -.1px; }
    .hbox i { width: 28px; height: 11px; background: #3392c8; border: 2px solid #6c9fb8; margin-right: 14px; }
    .sbtn { width: 56px; height: 48px; margin-left: 8px; flex: none; }
    .list { border: 2px solid #b2b2b2; background: #fff; border-right: 0; flex: none; }
    .lh { height: 38px; display: flex; align-items: center; background: linear-gradient(#fbfbfb, #ececec); border-bottom: 2px solid #b0b0b0; padding: 1px 0 0 6px; gap: 12px; }
    .vars { height: 401px; }
    .lr { height: 36px; display: flex; align-items: center; padding: 2px 0 0 6px; }
    .lr .vi { margin: 0 14px 0 15px; }
    .chk { width: 27px; height: 27px; background: #fff; border: 2px solid #b7b7b7; display: flex; align-items: center; justify-content: center; }
    .apply { display: flex; align-items: center; gap: 11px; height: 58px; flex: none; padding-top: 2px; }
    .disp { display: flex; height: 58px; flex: none; align-items: center; line-height: 30px; margin-bottom: 11px; padding-top: 2px; }
    .disp span { width: 174px; }
    .disp .in { width: 360px; height: 46px; border: 2px solid #aaa; border-radius: 5px; background: #fff; padding: 7px 0 0 6px; flex: none; }
    .edge { height: 81px; }
    .btabs { display: flex; height: 50px; margin-top: 10px; align-items: flex-end; flex: none; width: 560px; }
    .btabs .tab.a { height: 50px; background: #fff; padding-top: 3px; }
    .btabs .tab.b { height: 46px; background: #e9e9e9; padding-top: 2px; }
    .inner { border-left: 2px solid #b2b2b2; padding: 3px 0 0 3px; flex: none; }
    .inner .list { border-bottom: 0; }
    .inner .lh { height: 37px; }
    .inner .lr { height: 32px; padding-top: 0; gap: 13px; }
    .vs { border-left: 2px solid #b2b2b2; display: flex; flex-direction: column; background: linear-gradient(90deg, #dedede, #e9e9e9); }
    .vs .e { height: 27px; flex: none; background: #fff; display: flex; align-items: center; justify-content: center; padding: 0 1px 2px 0; }
    .vs .th { height: 261px; flex: none; background: linear-gradient(90deg, #fdfdfd, #f1f1f1); border: 2px solid #b8b8b8; border-width: 2px 0; }
    .vs .sp { flex: 1; border-bottom: 2px solid #b8b8b8; }
    .hs { display: flex; border-top: 2px solid #b2b2b2; background: linear-gradient(#fff, #f1f1f1); align-items: center; }
    .hs .a { width: 28px; height: 26px; display: flex; align-items: center; justify-content: center; border-right: 2px solid #c0c0c0; }
    .hs .a:last-child { border: 0; width: 26px; }
    .hs .g { width: 75px; height: 26px; background: #e5e5e5; border-right: 2px solid #b8b8b8; border-left: 2px solid #b8b8b8; }
    .hs .m { width: 390px; }
    .cor { border-left: 2px solid #b2b2b2; border-top: 2px solid #b2b2b2; }
    .right { width: 2763px; display: flex; flex-direction: column; }
    .ltabs { display: flex; height: 54px; align-items: flex-end; flex: none; }
    .ltab { width: 232px; height: 51px; background: #fff; border: 2px solid #bbb; border-bottom: 0; border-radius: 5px 5px 0 0; display: flex; align-items: center; padding-left: 21px; white-space: nowrap; }
    .ltab .lt { width: 127px; margin-left: 10px; letter-spacing: -.1px; }
    .atab { width: 67px; height: 47px; background: #e8e8e8; border: 2px solid #bbb; border-left: 0; display: flex; align-items: center; justify-content: center; border-bottom-color: #ababab; }
    .frame { height: 1596px; flex: none; border-left: 2px solid #b8b8b8; display: flex; flex-direction: column; }
    .vt { height: 54px; display: flex; align-items: center; background: linear-gradient(#f0f0f0, #f2f4f5); flex: none; }
    .vslot { width: 52px; display: flex; justify-content: center; }
    .two { width: 63px; font: 700 20px "DejaVu Sans", sans-serif; color: #666; text-align: center; padding-left: 12px; letter-spacing: -1px; }
    .rv { font-weight: 700; text-decoration: underline; text-decoration-thickness: 3px; text-underline-offset: 4px; width: 200px; }
    .wb { width: 51px; height: 49px; margin-right: 3.500px; border: 2px solid #b4b4b4; border-radius: 4px; background: linear-gradient(#fff, #f2f3f7); display: flex; align-items: center; justify-content: center; flex: none; }
    .view { height: 1540px; width: 2757px; margin-left: 1px; border: 4px solid #0a00ff; border-width: 2px 4px 2px 4px; border-top-color: transparent; flex: none; box-shadow: inset 0 -2px 0 #15121c, inset 0 2px 0 #0a00ff, inset 0 -4px 0 #e6e9f4, inset 0 4px 0 #d9d3f4, inset 0 0 0 2px #e8e8fa; background: linear-gradient(90deg, #0a00ff 206px, #22202c 206px) top / 100% 2px no-repeat border-box, #52576b; }
    .view svg { font-family: "Liberation Sans", sans-serif; margin-top: 2px; }
    .foot { flex: none; height: 50px; display: flex; padding: 9px 4px 0 1682px; background: linear-gradient(rgba(239,239,239,1), rgba(239,239,239,0)), linear-gradient(90deg, #efefef 23%, #dcdcdc 28%, #dcdcdc 73%, #efefef 78%); }
    .foot .x { width: 39px; height: 36px; border: 2px solid #c0c0c0; border-top-color: #ddd; background: #f0f0f0; display: flex; align-items: center; justify-content: center; margin-right: 5px; flex: none; }
    .foot .bar { flex: 1; height: 36px; border: 2px solid #a5a5a5; border-right: 0; border-bottom-color: #f8f8f8; }
    .desk { height: 166px; flex: none; display: grid; overflow: hidden; grid-template: 166px / 3584px; isolation: isolate; }
    .desk > * { grid-area: 1 / 1; }
    .ocean { overflow: hidden; display: grid; place-content: center; background: #071726; z-index: 0; }
    .ocean svg { transform: rotate(-12deg); }
    .shade { z-index: 1; background: linear-gradient(rgba(2,8,14,.75), rgba(2,8,14,.25) 30%, transparent 60%); }
    .dock { z-index: 2; justify-self: start; margin-left: 972px; width: 1640px; height: 176px; display: flex; padding: 0 8px; background: linear-gradient(#4a5d70, #43607e 70%); border-radius: 12px; }
    .di { width: 142px; height: 166px; display: grid; }
    .di > * { grid-area: 1 / 1; }
    .run { width: 8px; height: 8px; border-radius: 50%; background: #05080c; align-self: end; justify-self: center; margin-bottom: 4px; }
    .dsep { width: 61px; display: flex; justify-content: center; }
    .dsep b { width: 2px; height: 122px; margin-top: 22px; background: #24384f; }
    .dollar { font: 700 24px "Liberation Mono", monospace; fill: #4fe03a; }
    .badge { font: 28px Inter, sans-serif; fill: #fff; }
  `;

  private mac() {
    const c = "#15303f";
    return html`<div class="mac">
      <span class="apple"><svg width="27" height="32" viewBox="0 0 27 32" fill=${c}><path d="M18 0c.5 4-3 7.500-6 7.500C11.500 4 14.500.5 18 0zM26 11c-5 3-4 10 1 12-2 5-5 8.500-7.500 8.500-2 0-3-1-5.500-1s-3.500 1-5.500 1C4 31.500 0 24 0 18 0 12 4 8.500 8 8.500c2.500 0 4.500 1.500 6 1.500s4-1.700 6.500-1.500c2.200 0 4.200.8 5.500 2.500z"/></svg></span>
      <span class="app">NoMachine</span><span class="m1">File</span><span>Connections</span><span class="fill"></span>
      <div class="tray">
        <i style="width:52px"><svg width="32" height="30" viewBox="0 0 32 30" fill="none" stroke=${c} stroke-width="2.200"><path d="M7 13V1h16v12M2 12v14h16M2 12h5M23 12h2v4M6 19h13"/><rect x="17" y="16" width="14" height="13" rx="2" fill=${c}/><path d="M24 18v9M20 22.500h8" stroke="#d5e7f1"/></svg></i>
        <i style="width:49px"><svg width="32" height="32" viewBox="0 0 32 32"><circle cx="16" cy="16" r="14.500" fill="#c9dfec" stroke="#8ba3b3" stroke-width="2.500"/><path d="M3 10C6 4 11 2 15 3c3 2-1 4-2 6s-4 2-4 5c3 1 6 2 5 6-1 3-1 6-3 8C3 25 0 17 3 10zM20 4c5 1 8 5 9 9-3 0-3 3-6 2s-5-3-3-5 1-4 0-6zM21 19c3-1 6 0 8 1-1 4-4 7-7 8-1-3-3-7-1-9z" fill="#8ba3b3"/></svg></i>
        <i style="width:52px"><svg width="40" height="26" viewBox="0 0 40 26"><path d="M8 10C12-3 27-3 32 8z" fill="#70868f"/><path d="M5 26a9 9 0 0 1 3-17l14 8 12-9c8 4 8 16 0 18z" fill=${c}/><path d="M8 9l14 8 12-9q-4-2-8 0L16 12z" fill="#456273"/></svg></i>
        <i style="width:52px"><svg width="38" height="32" viewBox="0 0 38 32" fill=${c}><path d="M10 0l9 6-9 6-9-6zM28 0l9 6-9 6-9-6zM10 12l9 6-9 6-9-6zM28 12l9 6-9 6-9-6zM19 21l9 5.500-9 5.500-9-5.500z"/></svg></i>
        <i style="width:64px"><svg width="38" height="22" viewBox="0 0 38 22" fill="none" stroke-linecap="round"><path d="M12 5L5 16" stroke="#cc7434" stroke-width="4"/><circle cx="5" cy="16" r="4.500" fill="#cc7434"/><path d="M14 5l8 12 5-8" stroke=${c} stroke-width="4.500"/><circle cx="14" cy="5" r="4" fill=${c}/><circle cx="22" cy="17" r="4" fill=${c}/><circle cx="33" cy="4.500" r="3" stroke="#1d92cc" stroke-width="3.500"/><path d="M30 8l-3 4" stroke="#1d92cc" stroke-width="4"/></svg></i>
        <i style="width:45px"><svg width="32" height="32" viewBox="0 0 32 32" fill="none" stroke="#101010" stroke-width="3"><path d="M16 5L4 28h24z"/><circle cx="16" cy="3.500" r="2.500" fill="#101010"/><circle cx="3.500" cy="28.500" r="2" fill="#101010"/><circle cx="28.500" cy="28.500" r="2" fill="#101010"/></svg></i>
        <i style="width:70px"><svg width="46" height="32" viewBox="0 0 46 32" fill="none" stroke="#3d5666"><rect x="1.500" y="1.500" width="43" height="29" rx="4" stroke-width="3"/><path d="M11 6v13M11 22v4M18 26V8h19M27 12v14M35 8v18" stroke=${c} stroke-width="3.500"/></svg></i>
        <i style="width:58px"><svg width="30" height="30" viewBox="0 0 30 30" fill=${c}><path d="M5 0h7v6l2 3h2l2-3V0h7v6l5 18v6H18V18h-6v12H0v-6L5 6z"/></svg></i>
        <i style="width:60px"><svg width="40" height="29" viewBox="0 0 40 29" fill="none" stroke=${c} stroke-width="3"><path d="M2 10c10-11 26-11 36 0M8 16c7-7 17-7 24 0M14 21c4-4 8-4 12 0"/><circle cx="20" cy="26" r="1.500" fill=${c}/></svg></i>
        <i style="width:14px"></i><span class="pct">19%</span>
        <svg width="46" height="24" viewBox="0 0 46 24" fill="none" style="margin-top:-1px"><rect x="1.200" y="1.200" width="38" height="21.500" rx="4" stroke=${c} stroke-width="2.200"/><rect x="4" y="4" width="7" height="16" fill=${c}/><path d="M42 8q4 4 0 8z" fill=${c}/></svg>
        <i style="width:34px"></i><span class="clock">Fri 12:24</span>
        <i style="width:62px"><svg width="30" height="30" viewBox="0 0 30 30" fill="none" stroke="#333f48" stroke-width="2.600"><circle cx="12" cy="12" r="10"/><path d="M19 19l10 10"/></svg></i>
        <i style="width:68px"><svg width="32" height="32" viewBox="0 0 32 32"><defs><linearGradient id="si" x2=".3" y2="1"><stop stop-color="#c03a9c"/><stop offset=".4" stop-color="#6f55c8"/><stop offset=".7" stop-color="#2b8fd8"/><stop offset="1" stop-color="#1b3f8c"/></linearGradient></defs><circle cx="16" cy="16" r="16" fill="#10122c"/><circle cx="16" cy="16" r="13" fill="url(#si)"/><path d="M6 19l20-4M14 5l4 22M9 25L24 9" stroke="#dff8ff" stroke-width="1.600"/><circle cx="16.500" cy="16" r="3" fill="#fff"/></svg></i>
        <i style="width:48px"><svg width="36" height="22" viewBox="0 0 36 22" stroke="#26323b" stroke-width="4"><path d="M0 2.500h4M8 2.500h28M0 11h4M8 11h22M0 19.500h4M8 19.500h28"/></svg></i>
      </div></div>`;
  }

  private toolbars() {
    return html`
      <div class="tb t1">${gap(9)}${handle}${gap(7)}${bt("open")}${bt("save")}${sep(11)}${bt("connect")}${bt("disconnect")}${bt("reload")}${sep(13)}${bt("undo")}${bt("redo")}${sep(11)}${bt("extract")}${bt("cmapSel")}${bt("palette")}
        ${gap(18)}${handle}${gap(7)}${["first", "back", "play", "fwd", "last", "loop"].map((n) => bt(n))}${gap(16)}${handle}${gap(8)}
        <span style="width:73px">Time:</span><span class="combo" style="width:128px">0.2 ${arrowD()}</span>${gap(6)}
        <span class="spin">200<span class="ar"><span class="flip">${arrowD(13, "#999")}</span>${arrowD(13)}</span></span>${gap(6)}<span style="width:167px">(max is 200)</span>${gap(1)}${handle}${gap(8)}${bt("camPick")}${bt("camAdd")}
      </div>
      <div class="tb t2">${gap(9)}${handle}${gap(7)}${bt("cbar", "on")}${["edit", "linkc", "range", "rangeC", "rangeT", "rangeV"].map((n) => bt(n))}${gap(1)}
        <span class="combo" style="width:330px"><span class="lead"><b class="sq"></b>temperature</span>${arrowD()}</span>${gap(9)}<span class="combo off" style="width:158px"><span></span>${arrowD(13, "#cfcfcf")}</span>${gap(18)}${handle}${gap(6)}
        <span class="combo" style="width:299px">Surface ${arrowD()}</span>${gap(18)}${handle}${gap(7)}
        ${["resetCam", "zoomData", "zoomBox", "pX", "mX", "pY", "mY", "pZ", "mZ", "rotP", "rotM"].map((n) => bt(n))}${gap(17)}${handle}${gap(7)}${bt("axesVis", "on")}${bt("cen1")}${bt("cen2")}${bt("cen3")}${gap(17)}${handle}
      </div>
      <div class="tb t3">${gap(9)}${handle}${gap(6)}${["calc", "contour", "clip", "slice", "threshold", "subset", "glyph", "stream", "warp", "group", "extractG"].map((n) => bt(n))}${gap(16)}${handle}${gap(5)}
        ${["selShape", "plotTime", "plotLine", "plotSel", "probe"].map((n) => bt(n))}${gap(17)}${handle}${gap(6)}${bt("ruler")}
      </div>`;
  }

  private left() {
    const cells = ["Object Ids", "Global Element Ids", "LOAD_BAL", "PROC_ID"];
    const nodes = ["Global Node Ids", "density", "temperature", "velocity_0", "velocity_1"];
    return html`<div class="left">
      <div class="dtitle">Pipeline Browser ${dockBtns}</div>
      <div class="tree">
        <div class="trow r1"><svg class="tic" width="17" height="30" viewBox="0 0 17 30"><path d="M9-11v9M9 33v8" stroke="#777" stroke-width="1.500"/><rect x="1" y="1" width="15" height="28" fill="#b5b5b5" stroke="#333" stroke-width="2"/><path d="M4 6h9M9 11h4" stroke="#111" stroke-width="3"/></svg>builtin:</div>
        <div class="trow"><svg width="28" height="20" viewBox="0 0 28 20" style="margin:0 16px 0 7px"><path d="M1 10Q14-6 27 10 14 24 1 10z" fill="#eef0f2" stroke="#aab" stroke-width="1.500"/><circle cx="14" cy="10" r="8" fill="#5b8fb5"/><circle cx="14.500" cy="10" r="5" fill="#0c1a30"/><circle cx="11" cy="7" r="2" fill="#fff"/></svg>
          <span class="sel"><svg width="25" height="25" viewBox="0 0 25 25"><rect x="1" y="3" width="14" height="19" rx="3" fill="#2d6b48"/><rect x="9" y="5" width="16" height="18" rx="2" fill="#5fad66"/></svg>solution.exo</span></div>
      </div>
      <div class="dots"><i></i></div>
      <div class="tabs"><span class="tab a" style="width:172px">Properties</span><span class="tab b" style="width:186px">Information</span><span class="tail"></span></div>
      <div class="dtitle">Properties ${dockBtns}</div>
      <div class="btns">
        <span class="btn off w158"><svg width="26" height="26" viewBox="0 0 26 26" style="margin-right:5px"><path d="M1 12l6-4 6 2v11l-6 4-6-3zM13 12l4-8h8v12l-4 3-5-1z" fill="#bcbcbc"/></svg>Apply</span>
        <span class="btn off w158"><svg width="28" height="28" viewBox="0 0 28 28" style="margin-right:5px"><circle cx="14" cy="14" r="11" fill="none" stroke="#a3a3a3" stroke-width="5"/><path d="M7 21L21 7" stroke="#a3a3a3" stroke-width="4"/></svg>Reset</span>
        <span class="btn w158"><svg width="20" height="20" viewBox="0 0 20 20" style="margin-right:10px"><path d="M3 3l14 14M17 3L3 17" stroke="#dd2848" stroke-width="7.500"/></svg>Delete</span>
        <span class="btn w55"><svg width="22" height="30" viewBox="0 0 22 30" fill="none"><path d="M3 8c1-8 16-7 16 1 0 6-8 6-8 13M11 25v4" stroke="#8f957a" stroke-width="5"/><path d="M3 8c1-8 16-7 16 1 0 6-8 6-8 13M11 25v4" stroke="#b9c4a0" stroke-width="2"/></svg></span>
      </div>
      <div class="search"><span class="field">Search ... (use Esc to clear text)</span><span class="btn" style="width:48px"><svg width="30" height="30" viewBox="0 0 30 30"><circle cx="15" cy="15" r="12" fill="none" stroke="#a5a5a5" stroke-width="5" stroke-dasharray="5.500 3.900"/><circle cx="15" cy="15" r="11" fill="#cdcdcd" stroke="#a5a5a5" stroke-width="1.500"/><circle cx="15" cy="15" r="4.500" fill="#f3f3f3" stroke="#9b9b9b" stroke-width="2"/></svg></span></div>
      <div class="area">
        <div class="clip">
          <div class="head"><span class="hbox"><i></i>Properties (solution.</span>
            <span class="btn sbtn"><svg width="30" height="30" viewBox="0 0 30 30" fill="#e0e0e0" stroke="#a3a3a3" stroke-width="1.800"><path d="M12 1h12l5 5v16H12zM1 9h12l5 5v15H1z"/><path d="M4 16h10M4 20h10M4 24h8M20 10h6M20 14h6"/></svg></span>
            <span class="btn off sbtn"><svg width="30" height="30" viewBox="0 0 30 30" fill="#c9c9c9" stroke="#b5b5b5" stroke-width="1.500"><path d="M11 3h4l2-2h6l2 2h4v20H11z"/><path d="M1 9h10l5 5v15H1z" fill="#e5e5e5"/><path d="M4 17h9M4 21h9"/></svg></span>
            <span class="btn sbtn"><svg width="30" height="30" viewBox="0 0 30 30"><path d="M15 3C8 4 5 8 4 13M4 20c2 5 6 8 11 8" fill="none" stroke="#5f8fa3" stroke-width="6"/></svg></span></div>
          <div class="list vars"><div class="lh">${check()}Variables</div>
            ${cells.map((t) => html`<div class="lr">${check()}${cellIc}${t}</div>`)}${nodes.map((t) => html`<div class="lr">${check()}${nodeIc}${t}</div>`)}</div>
          <div class="apply">${check()}Apply Displacements</div>
          <div class="disp"><span>Displacement Magnitude</span><div class="in">1</div></div>
          <div class="list edge"><div class="lh">${check(false)}Edge Blocks</div></div>
          <div class="btabs"><span class="tab a" style="width:127px">Blocks</span><span class="tab b" style="width:184px">Assemblies</span><span class="tab b" style="width:156px">Materials</span><span class="tail"></span></div>
          <div class="inner"><div class="list"><div class="lh">${check()}Blocks</div><div class="lr">${check()}block_1</div></div></div>
        </div>
        <div class="vs"><span class="e"><span class="flip">${arrowD(14)}</span></span><span class="th"></span><span class="sp"></span><span class="e">${arrowD(14)}</span></div>
        <div class="hs"><span class="a"><svg width="9" height="15" viewBox="0 0 9 15"><path d="M9 0v15L0 7.500z" fill="#555"/></svg></span><span class="m"></span><span class="g"></span><span class="a"><svg width="9" height="15" viewBox="0 0 9 15"><path d="M0 0v15l9-7.500z" fill="#555"/></svg></span></div>
        <div class="cor"></div>
      </div>
    </div>`;
  }

  private scene() {
    const stops: [number, string][] = [[0, "#abaaa3"], [3, "#acaa9e"], [20, "#acaa9e"], [25, "#a6a9a6"], [28.5, "#9daaac"], [30.5, "#93a6ba"], [33.5, "#859cc0"], [35.7, "#738fc0"], [37.7, "#6886bd"], [38.2, "#5a74b6"], [40.3, "#5f78b8"], [41.2, "#5068ae"], [44.2, "#5068ae"], [45.7, "#4459a5"], [47.5, "#4c66ac"], [49, "#465ea7"], [50, "#3e51a0"], [51, "#5069b2"], [52.9, "#4f66b0"], [54.2, "#2a3990"], [55.1, "#4358aa"], [55.7, "#7088bd"], [56.3, "#a7b2b3"], [56.9, "#c5ad93"], [57.5, "#c4755c"], [58.3, "#9c2a2a"], [59, "#8d0f1b"], [61, "#8e141c"], [67, "#962220"], [70, "#a33a2c"], [72, "#b35a40"], [74, "#c07856"], [75.5, "#c38a68"], [77, "#ba9a80"], [79, "#b0a495"], [83, "#aba8a0"], [88, "#aaaa9c"], [100, "#aaa99e"]];
    const labels: [string, number, number][] = [["1.2e+00", 1485, 1488], ["1.15", 1528, 1533], ["1.1", 1596, 1601], ["1.05", 1666, 1671], ["1", 1734, 1739], ["0.95", 1804, 1809], ["0.9", 1872, 1877], ["0.85", 1940, 1945], ["8.2e-01", 1988, 1992]];
    return html`<svg width="2748" height="1532" viewBox="700 486 2748 1532">
      <defs>
        <linearGradient id="sl">${stops.map(([o, c]) => svg`<stop offset="${o}%" stop-color=${c}/>`)}</linearGradient>
        <linearGradient id="cm" x2="0" y2="1"><stop offset="0" stop-color="#b40f2a"/><stop offset=".12" stop-color="#d9503f"/><stop offset=".25" stop-color="#f0896a"/><stop offset=".35" stop-color="#f6a889"/><stop offset=".43" stop-color="#edc9b8"/><stop offset=".5" stop-color="#dcdcdc"/><stop offset=".58" stop-color="#c6d5ee"/><stop offset=".68" stop-color="#a8c5f5"/><stop offset=".78" stop-color="#85a7f3"/><stop offset=".88" stop-color="#5e80e2"/><stop offset="1" stop-color="#3b4cc0"/></linearGradient>
      </defs>
      <rect x="1314" y="1176" width="1520" height="152" fill="url(#sl)"/>
      <path d="M1314 1177h1519" stroke="#a9a5b0" stroke-width="3" opacity=".35"/>
      <rect x="3214" y="1488" width="32" height="504" fill="url(#cm)"/>
      <path d="M3214 1487h232M3246 1991h200" stroke="#f4f4fa" stroke-width="2"/>
      ${labels.map(([t, y, ty]) => svg`<path d="M3240 ${ty}h24" stroke="#fff" stroke-width="2"/><text x=${t[0] === "1" ? 3275 : 3273} y=${y + 11} font-size="32" fill="#dcdeee">${t}</text>`)}
      <text transform="translate(3428 1835) rotate(-90)" font-size="36" fill="#eceef8">temperature</text>
      <path d="M893 1740v76" stroke="#c9c85e" stroke-width="2.500"/><path d="M895.500 1740v76" stroke="#5c6420" stroke-width="2"/>
      <path d="M893 1718l7 22h-14z" fill="#d8ea00"/><path d="M886 1738.500h14" stroke="#4e5400" stroke-width="3"/>
      <path d="M903 1825h14" stroke="#dde" stroke-width="2"/><path d="M924 1825.500h55" stroke="#b8204a" stroke-width="3"/><path d="M978 1817v16l18-4v-8z" fill="#f00"/><path d="M979 1817v16" stroke="#600" stroke-width="2"/>
      <circle cx="893" cy="1825" r="9.500" fill="#0b5a0b"/>
      <text x="897" y="1740" font-size="29" fill="#eef">Y</text><text x="898" y="1821" font-size="29" fill="#eef">Z</text><text x="983" y="1825" font-size="27" fill="#eef">X</text>
    </svg>`;
  }

  private right() {
    const w = (b: unknown) => html`<span class="wb"><svg width="28" height="28" viewBox="0 0 28 28" fill="none">${b}</svg></span>`;
    return html`<div class="right">
      <div class="ltabs"><span class="ltab"><svg width="18" height="18" viewBox="0 0 18 18"><rect x="1" y="1" width="15" height="16" fill="#fff" stroke="#000" stroke-width="2"/><path d="M0 3h17" stroke="#000" stroke-width="4"/></svg><span class="lt">Layout #1</span>
        <svg width="22" height="22" viewBox="0 0 22 22" fill="none" stroke="#777" stroke-width="2" style="margin-left:4px"><rect x="1" y="1" width="20" height="20" rx="4"/><path d="M6 6l10 10M16 6L6 16" stroke-width="4"/></svg></span><span class="atab">+</span><span class="tail"></span></div>
      <div class="frame"><div class="vt">
        ${vb("undo")}${vb("redo")}${sep(13)}${vb("snap")}<span class="two">2D</span>${vb("zoom")}${sep(13)}${["selAdd", "selSub", "selTog"].map(vb)}${sep(12)}
        ${["cells", "points", "frus", "frusP", "poly", "polyP", "block", "hovP", "hovC", "cellI", "pntI", "qP", "qC", "plus", "minus", "clear"].map(vb)}
        ${gap(1045)}<span class="rv">RenderView1</span>
        ${w(svg`<rect x="1" y="1" width="26" height="26" fill="#d6d8e8" stroke="#9a9cb0" stroke-width="2"/><path d="M14 1v26" stroke="#9a9cb0" stroke-width="2"/>`)}
        ${w(svg`<rect x="1" y="1" width="26" height="26" fill="#d6d8e8" stroke="#9a9cb0" stroke-width="2"/><path d="M1 14h26" stroke="#9a9cb0" stroke-width="2"/>`)}
        ${w(svg`<rect x="5" y="6" width="16" height="16" fill="#fff" stroke="#000" stroke-width="2"/><path d="M4 7.500h18" stroke="#000" stroke-width="4"/>`)}
        ${w(svg`<rect x="4" y="4" width="21" height="21" rx="4" stroke="#666" stroke-width="2"/><path d="M9 9l11 11M20 9L9 20" stroke="#666" stroke-width="4"/>`)}
      </div>
      <div class="view">${this.scene()}</div></div>
    </div>`;
  }

  render() {
    const menus: [string, string, string][] = [["", "F", "ile"], ["", "E", "dit"], ["", "V", "iew"], ["", "S", "ources"], ["Fi", "l", "ters"], ["", "T", "ools"], ["", "C", "atalyst"], ["", "M", "acros"], ["", "H", "elp"]];
    const apps: [string, boolean][] = [["finder", true], ["rocket", false], ["safari", true], ["chrome", true], ["leaf", false], ["term", true], ["notes", false], ["outlook", true], ["teams", true], ["nx", true]];
    const app = ([n, r]: [string, boolean]) => html`<div class="di"><svg width="142" height="166" viewBox="0 0 142 166">${D[n]}</svg>${r ? html`<b class="run"></b>` : ""}</div>`;
    return html`<div class="screen">
      ${this.mac()}
      <div class="title"><span class="dot" style="background:#ed6a5e"></span><span class="dot" style="background:#f5bf4f"></span><span class="dot" style="background:#61c454"></span><span class="name">NoMachine - narsil</span></div>
      <div class="win">
        <div class="remote">
          <div class="strip"></div>
          <div class="menu">${menus.map(([a, b, c]) => html`<span>${a}<u>${b}</u>${c}</span>`)}</div>
          ${this.toolbars()}
          <div class="body">${this.left()}<div class="gutter"><i></i></div>${this.right()}</div>
          <div class="foot"><span class="x"><svg width="16" height="16" viewBox="0 0 16 16"><path d="M2 2l12 12M14 2L2 14" stroke="#8d8d8d" stroke-width="6"/></svg></span><span class="bar"></span></div>
        </div>
        <div class="mscroll"><i></i></div>
      </div>
      <div class="desk">${ocean}<div class="shade"></div><div class="dock">${apps.map(app)}<span class="dsep"><b></b></span>${app(["trash", false])}</div></div>
    </div>`;
  }
}
